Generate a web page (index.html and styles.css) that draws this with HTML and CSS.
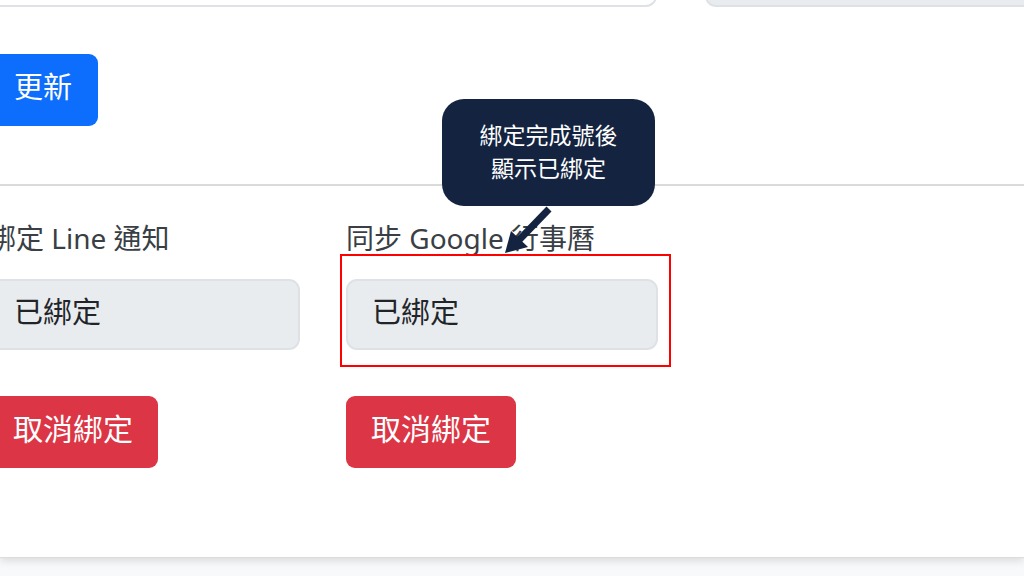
FILE: index.html
```html
<!DOCTYPE html>
<html lang="zh-Hant">
<head>
  <meta charset="UTF-8" />
  <meta name="viewport" content="width=device-width, initial-scale=1.0"/>
  <title>帳號設定</title>
  <link rel="stylesheet" href="styles.css">
</head>
<body>

  <div class="card">
    <div class="card-body">
      <!-- 上方欄位（被畫面裁切） -->
      <div class="top-row">
        <div class="form-control"></div>
        <div class="form-control readonly"></div>
      </div>

      <button class="btn btn-primary update-btn">更新</button>

      <hr class="divider">

      <!-- 綁定區塊 -->
      <div class="bind-row">
        <div class="bind-col">
          <label class="form-label">綁定 Line 通知</label>
          <div class="form-control readonly">已綁定</div>
          <button class="btn btn-danger">取消綁定</button>
        </div>
        <div class="bind-col">
          <label class="form-label">同步 Google 行事曆</label>
          <div class="field-wrap">
            <div class="form-control readonly">已綁定</div>
            <span class="highlight-box"></span>
          </div>
          <button class="btn btn-danger">取消綁定</button>
        </div>
      </div>
    </div>
  </div>

  <!-- 說明標註 -->
  <div class="callout">綁定完成號後<br>顯示已綁定</div>
  <svg class="callout-arrow" width="1024" height="576" viewBox="0 0 1024 576">
    <line x1="549" y1="209" x2="519" y2="240" stroke="#14233f" stroke-width="7" />
    <polygon points="505,253 511,231 528,247" fill="#14233f" />
  </svg>

</body>
</html>
```

FILE: styles.css
```css
/* --- 基本設定 --- */
html, body {
  margin: 0;
  height: 576px;
  overflow: hidden;
}

body {
  background-color: #f8f9fa;
  font-family: "Noto Sans", "Noto Sans CJK TC", sans-serif;
  color: #212529;
  position: relative;
}

/* --- 卡片 --- */
.card {
  background-color: #fff;
  border-bottom: 1px solid #dcdcdc;
  box-shadow: 0 3px 8px rgba(0, 0, 0, 0.12);
}

.card-body {
  margin-left: -12px;
  padding-bottom: 89px;
}

/* --- 上方欄位 --- */
.top-row {
  display: flex;
  gap: 48px;
  margin-top: -64px;
}

.top-row .form-control {
  width: 669px;
  flex-shrink: 0;
  background-color: #fff;
}

.top-row .form-control.readonly {
  background-color: #e9ecef;
}

/* --- 表單元件 --- */
.form-control {
  box-sizing: border-box;
  height: 71px;
  border: 2px solid #dee2e6;
  border-radius: 11px;
  padding: 0 24px 6px;
  font-size: 29px;
  line-height: 61px;
}

.form-control.readonly {
  background-color: #e9ecef;
  color: #212529;
}

.form-label {
  display: block;
  font-size: 28px;
  line-height: 42px;
  color: #3a3f45;
  margin-bottom: 20px;
  white-space: nowrap;
}

/* --- 按鈕 --- */
.btn {
  display: block;
  box-sizing: border-box;
  height: 72px;
  padding: 0 25px 6px;
  border: 0;
  border-radius: 9px;
  font-family: inherit;
  font-size: 30px;
  line-height: 66px;
  color: #fff;
  cursor: pointer;
}

.btn-primary {
  background-color: #0d6efd;
  font-size: 29px;
  padding: 0 26px 6px;
}

.btn-danger {
  background-color: #dc3545;
}

.update-btn {
  margin-top: 47px;
}

/* --- 分隔線 --- */
.divider {
  border: 0;
  height: 2px;
  background-color: #dadada;
  margin: 58px 0 0 12px;
}

/* --- 綁定區塊 --- */
.bind-row {
  display: flex;
  gap: 46px;
  margin-top: 31px;
}

.bind-col {
  width: 312px;
  display: flex;
  flex-direction: column;
  align-items: flex-start;
}

.bind-col .form-control,
.bind-col .field-wrap {
  align-self: stretch;
}

.bind-col .btn {
  margin-top: 46px;
}

.field-wrap {
  position: relative;
}

/* 紅色標註框 */
.highlight-box {
  position: absolute;
  top: -25px;
  left: -6px;
  right: -13px;
  bottom: -17px;
  border: 2px solid #ff0000;
  pointer-events: none;
}

/* --- 說明泡泡 --- */
.callout {
  position: absolute;
  left: 442px;
  top: 99px;
  width: 213px;
  height: 107px;
  box-sizing: border-box;
  padding-top: 20px;
  background-color: #14233f;
  border-radius: 22px;
  color: #fff;
  font-size: 23px;
  line-height: 33px;
  text-align: center;
}

.callout-arrow {
  position: absolute;
  left: 0;
  top: 0;
  pointer-events: none;
}
```
